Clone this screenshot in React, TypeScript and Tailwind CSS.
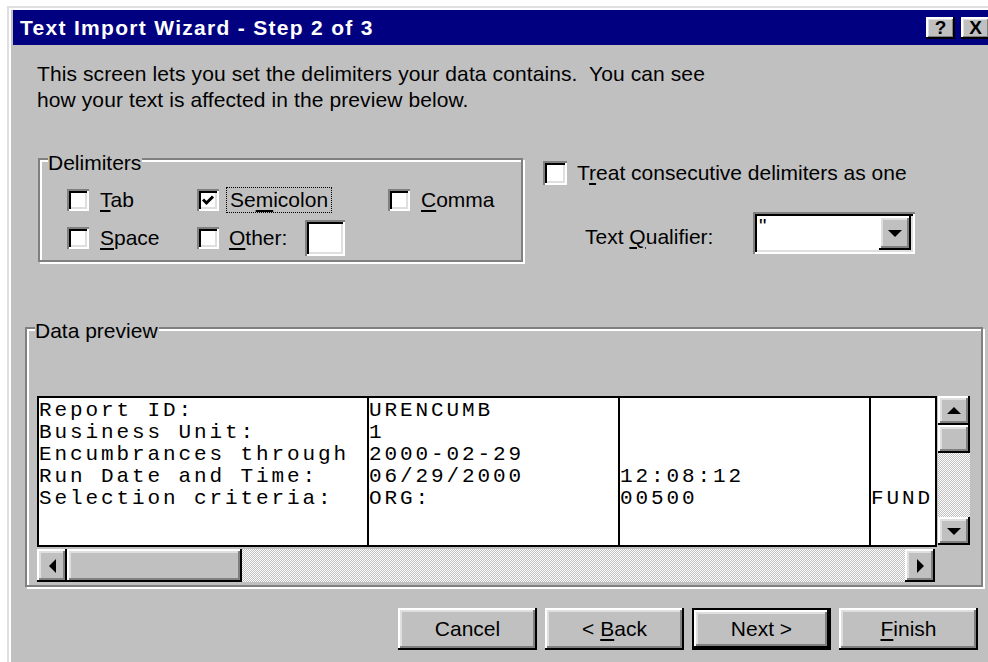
import React from 'react';

// classic 3D bevels, drawn at double pixel size
const RAISED =
  'bg-[#c0c0c0] shadow-[inset_-2px_-2px_0_#000,inset_2px_2px_0_#fff,inset_-4px_-4px_0_#808080,inset_4px_4px_0_#dfdfdf]';
const SMALL_RAISED =
  'bg-[#c0c0c0] shadow-[inset_-2px_-2px_0_#000,inset_2px_2px_0_#fff,inset_-3px_-3px_0_#808080,inset_3px_3px_0_#dfdfdf]';
const SUNKEN =
  'bg-white shadow-[inset_2px_2px_0_#808080,inset_-2px_-2px_0_#fff,inset_4px_4px_0_#000,inset_-4px_-4px_0_#dfdfdf]';
const ETCHED = 'border-2 border-[#808080] shadow-[inset_2px_2px_0_#fff,2px_2px_0_#fff]';
const DITHER =
  'bg-[image:repeating-conic-gradient(#ffffff_0%_25%,#c0c0c0_0%_50%)] bg-[length:2px_2px]';

type Dir = 'up' | 'down' | 'left' | 'right';

function Arrow({ dir }: { dir: Dir }) {
  if (dir === 'up' || dir === 'down') {
    return (
      <svg width="14" height="7" viewBox="0 0 14 7">
        <polygon points={dir === 'up' ? '0,7 14,7 7,0' : '0,0 14,0 7,7'} fill="#000" />
      </svg>
    );
  }
  return (
    <svg width="7" height="14" viewBox="0 0 7 14">
      <polygon points={dir === 'left' ? '7,0 7,14 0,7' : '0,0 0,14 7,7'} fill="#000" />
    </svg>
  );
}

function CheckBox({ checked = false, big = false }: { checked?: boolean; big?: boolean }) {
  return (
    <span
      className={`${SUNKEN} flex shrink-0 items-center justify-center ${
        big ? 'h-[24px] w-[24px]' : 'h-[22px] w-[22px]'
      }`}
    >
      {checked && (
        <svg width="14" height="14" viewBox="0 0 14 14">
          <path d="M2 6.5 L5.5 10 L12 3.5" stroke="#000" strokeWidth="3" fill="none" />
        </svg>
      )}
    </span>
  );
}

function Key({ children }: { children: React.ReactNode }) {
  return <u className="decoration-[1.5px] underline-offset-[3px]">{children}</u>;
}

function Button({ children, isDefault = false }: { children: React.ReactNode; isDefault?: boolean }) {
  const label = <span className="whitespace-pre">{children}</span>;
  if (isDefault) {
    return (
      <div className="h-[42px] w-[139px] border-2 border-black">
        <div className={`${RAISED} flex h-full w-full items-center justify-center`}>{label}</div>
      </div>
    );
  }
  return (
    <div className={`${RAISED} flex h-[42px] w-[139px] items-center justify-center`}>{label}</div>
  );
}

const rows: [string, string, string, string][] = [
  ['Report ID:', 'URENCUMB', '', ''],
  ['Business Unit:', '1', '', ''],
  ['Encumbrances through', '2000-02-29', '', ''],
  ['Run Date and Time:', '06/29/2000', '12:08:12', ''],
  ['Selection criteria:', 'ORG:', '00500', 'FUND'],
];

function Column({ index, className }: { index: number; className: string }) {
  return (
    <div className={`${className} h-full overflow-hidden whitespace-pre pt-[2px]`}>
      {rows.map((r, i) => (
        <div key={i} className="h-[22px]">
          {r[index]}
        </div>
      ))}
    </div>
  );
}

export default function App() {
  return (
    <div className="h-[662px] w-[988px] overflow-hidden bg-white font-['Liberation_Sans',Arial,sans-serif] text-[21px] leading-[26px] text-black">
      <div className="ml-[7px] mt-[6px] h-[700px] w-[993px] border-l-2 border-t-2 border-[#dfdfdf] bg-[#c0c0c0] px-[4px] pt-[2px] shadow-[inset_2px_2px_0_#fff]">
        {/* caption */}
        <div className="flex h-[35px] items-center bg-[#000080] pl-[7px] pr-[6px]">
          <span className="flex-1 text-[21px] font-bold tracking-[1.3px] text-white">
            Text Import Wizard - Step 2 of 3
          </span>
          <div className={`${SMALL_RAISED} flex h-[22px] w-[29px] items-center justify-center text-[19px] font-bold leading-none`}>
            ?
          </div>
          <div className={`${SMALL_RAISED} ml-[6px] flex h-[22px] w-[29px] items-center justify-center text-[19px] font-bold leading-none`}>
            X
          </div>
        </div>

        <p className="ml-[24px] mt-[16px] tracking-[0.1px]">
          This screen lets you set the delimiters your data {'contains.\u00a0 You can see'}
          <br />
          how your text is affected in the preview below.
        </p>

        <div className="ml-[25px] mt-[45px] flex">
          {/* Delimiters group */}
          <div className={`${ETCHED} relative h-[104px] w-[485px] pl-[27px] pt-[21px]`}>
            <span className="absolute left-[8px] top-[-10px] bg-[#c0c0c0] pr-[1px]">Delimiters</span>
            <div className="flex h-[38px] items-center">
              <div className="flex w-[130px] items-center">
                <CheckBox />
                <span className="ml-[11px]">
                  <Key>T</Key>ab
                </span>
              </div>
              <div className="flex w-[191px] items-center">
                <CheckBox checked />
                <span className="ml-[7px] border border-dotted border-black px-[3px] leading-[24px]">
                  Se<Key>m</Key>icolon
                </span>
              </div>
              <div className="flex items-center">
                <CheckBox />
                <span className="ml-[11px]">
                  <Key>C</Key>omma
                </span>
              </div>
            </div>
            <div className="flex h-[38px] items-center">
              <div className="flex w-[130px] items-center">
                <CheckBox />
                <span className="ml-[11px]">
                  <Key>S</Key>pace
                </span>
              </div>
              <div className="flex items-center">
                <CheckBox />
                <span className="ml-[10px]">
                  <Key>O</Key>ther:
                </span>
                <div className={`${SUNKEN} ml-[18px] h-[36px] w-[40px]`} />
              </div>
            </div>
          </div>

          {/* consecutive delimiters + qualifier */}
          <div className="ml-[20px] flex flex-col">
            <div className="mt-[2px] flex items-center">
              <CheckBox big />
              <span className="ml-[10px]">
                T<Key>r</Key>eat consecutive delimiters as one
              </span>
            </div>
            <div className="mt-[26px] flex items-center">
              <span className="ml-[42px] mt-[8px] w-[168px]">
                Text <Key>Q</Key>ualifier:
              </span>
              <div className={`${SUNKEN} flex h-[42px] w-[162px] p-[4px]`}>
                <span className="flex-1 pl-[2px] leading-[20px]">"</span>
                <div className={`${RAISED} flex h-[34px] w-[32px] items-center justify-center`}>
                  <Arrow dir="down" />
                </div>
              </div>
            </div>
          </div>
        </div>

        {/* Data preview group */}
        <div className={`${ETCHED} relative ml-[12px] mt-[65px] h-[260px] w-[958px] pl-[10px] pt-[67px]`}>
          <span className="absolute left-[8px] top-[-11px] bg-[#c0c0c0] pr-[1px]">Data preview</span>

          <div className="flex items-start">
            <div className="flex h-[151px] w-[900px] border-2 border-black bg-white font-['Liberation_Mono','Courier_New',monospace] text-[21px] leading-[22px] tracking-[2.9px]">
              <Column index={0} className="w-[330px] border-r-2 border-black" />
              <Column index={1} className="w-[251px] border-r-2 border-black" />
              <Column index={2} className="w-[251px] border-r-2 border-black" />
              <Column index={3} className="flex-1" />
            </div>
            <div className="ml-[1px] flex h-[149px] w-[32px] flex-col">
              <div className={`${RAISED} flex h-[29px] items-center justify-center`}>
                <Arrow dir="up" />
              </div>
              <div className={`${RAISED} h-[28px]`} />
              <div className={`${DITHER} flex-1`} />
              <div className={`${RAISED} flex h-[28px] items-center justify-center`}>
                <Arrow dir="down" />
              </div>
            </div>
          </div>

          <div className="mt-[2px] flex h-[33px] w-[898px]">
            <div className={`${RAISED} flex w-[30px] items-center justify-center`}>
              <Arrow dir="left" />
            </div>
            <div className={`${RAISED} w-[175px]`} />
            <div className={`${DITHER} flex-1`} />
            <div className={`${RAISED} flex w-[30px] items-center justify-center`}>
              <Arrow dir="right" />
            </div>
          </div>
        </div>

        {/* wizard buttons */}
        <div className="ml-[385px] mt-[21px] flex gap-[8px]">
          <Button>Cancel</Button>
          <Button>
            {'< '}
            <Key>B</Key>ack
          </Button>
          <Button isDefault>{'Next >'}</Button>
          <Button>
            <Key>F</Key>inish
          </Button>
        </div>
      </div>
    </div>
  );
}
